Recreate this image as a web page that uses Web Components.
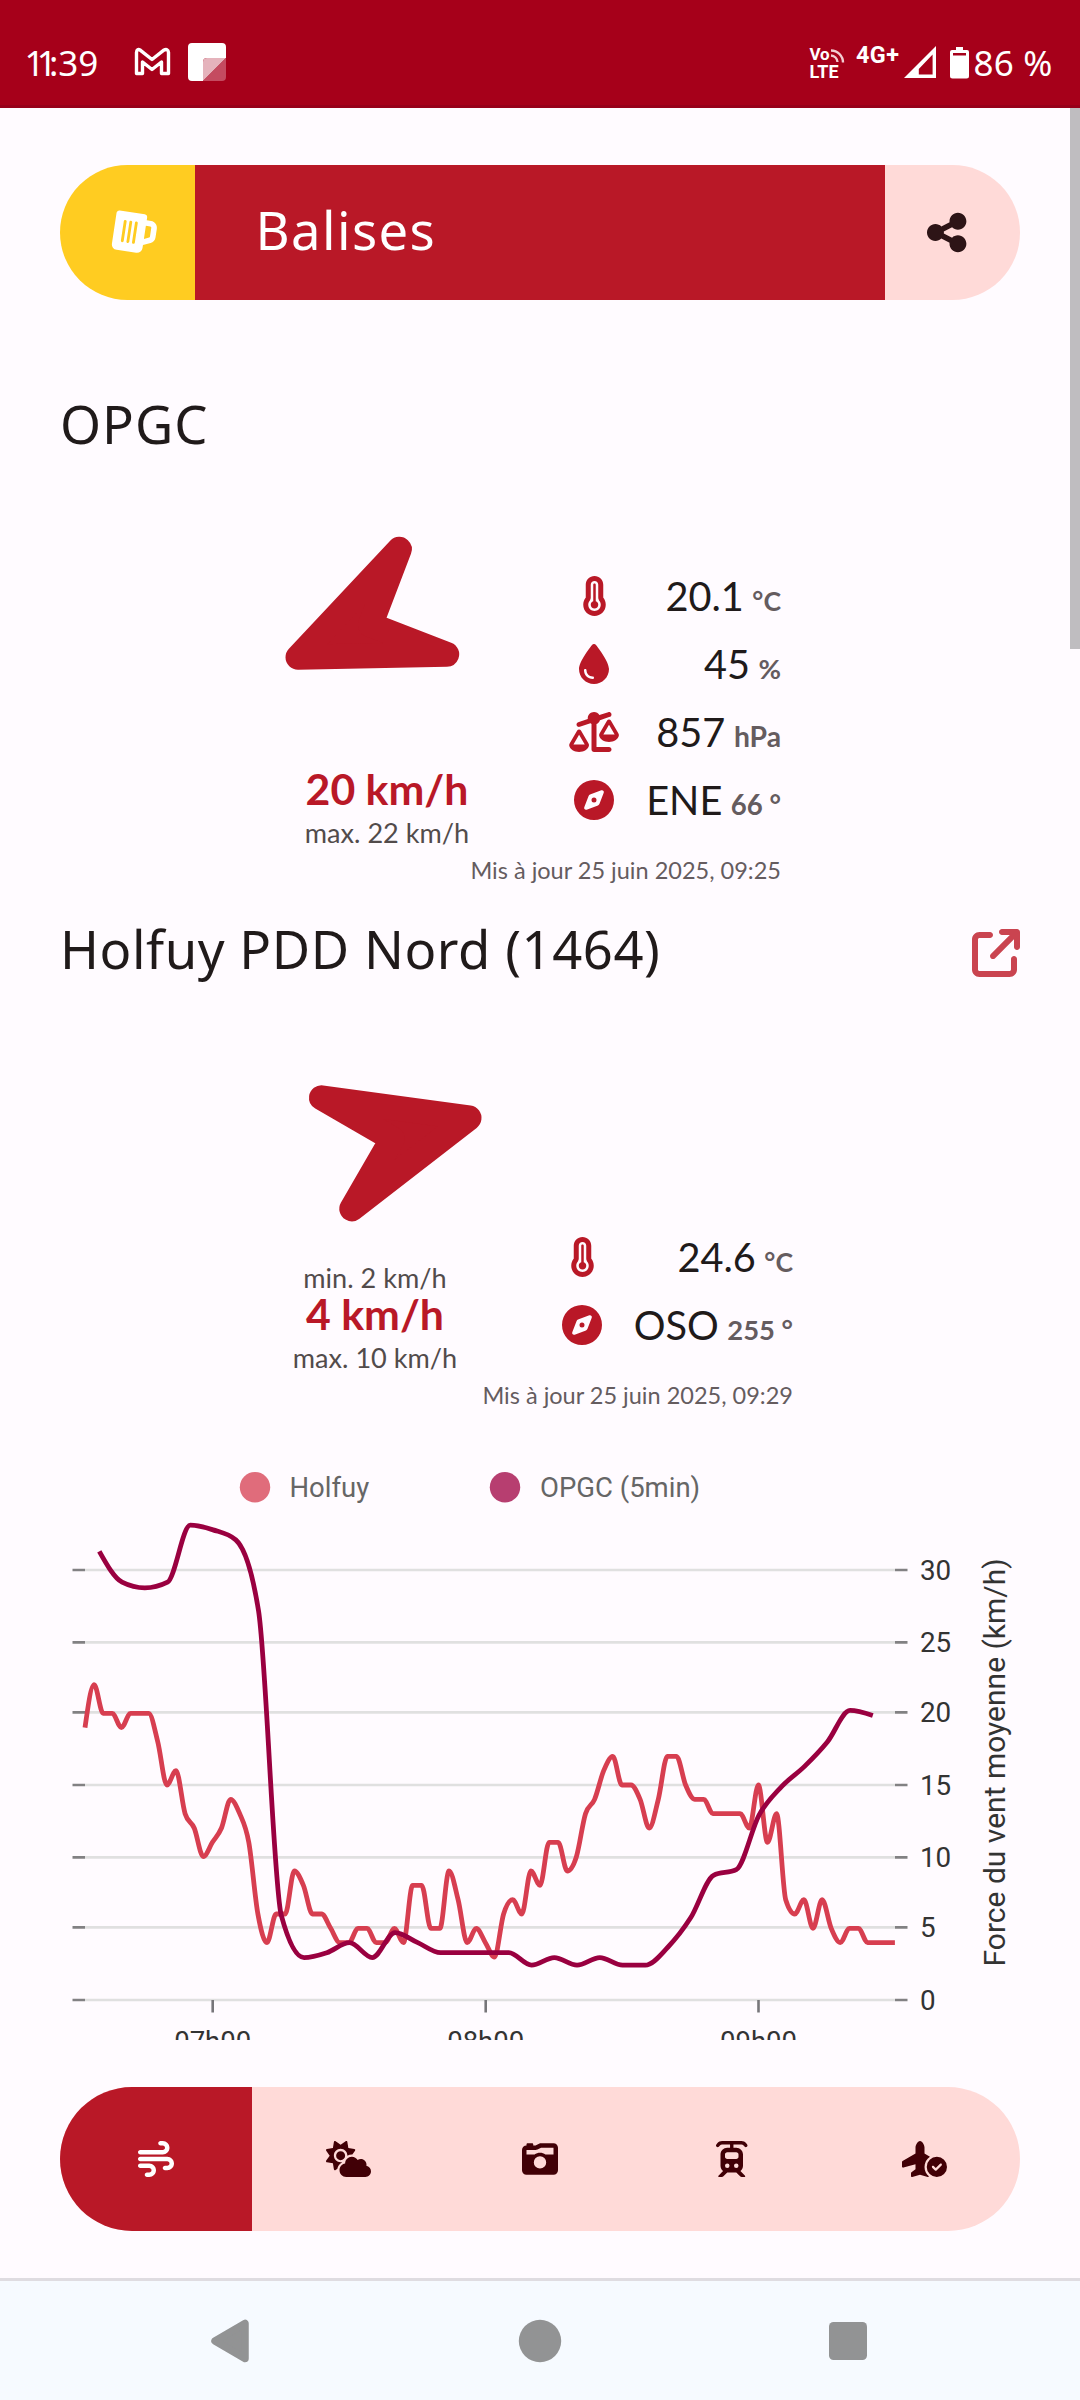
<!DOCTYPE html>
<html lang="fr">
<head>
<meta charset="utf-8">
<title>Balises</title>
<style>
  body { margin: 0; background: #fffbff; }
</style>
</head>
<body>
<balises-app></balises-app>

<script>
const ICONS = {
  thermo: ['0 0 320 512', 'M160 64c-26.500 0-48 21.500-48 48V276.500c0 17.300-7.100 31.900-15.300 42.500C86.200 332.600 80 349.500 80 368c0 44.200 35.800 80 80 80s80-35.800 80-80c0-18.500-6.200-35.400-16.700-48.900c-8.200-10.600-15.300-25.200-15.300-42.500V112c0-26.500-21.500-48-48-48zM48 112C48 50.200 98.100 0 160 0s112 50.100 112 112V276.500c0 .1 .1 .3 .2 .6c.2 .6 .8 1.600 1.700 2.800c18.900 24.400 30.100 55 30.100 88.100c0 79.500-64.500 144-144 144S16 447.500 16 368c0-33.200 11.200-63.800 30.100-88.100c.9-1.200 1.500-2.200 1.700-2.800c.1-.3 .2-.5 .2-.6V112zM208 368c0 26.500-21.500 48-48 48s-48-21.500-48-48c0-20.900 13.400-38.700 32-45.300V112c0-8.800 7.200-16 16-16s16 7.200 16 16V322.700c18.600 6.600 32 24.400 32 45.300z'],
  drop: ['0 0 384 512', 'M192 512C86 512 0 426 0 320C0 228.800 130.200 57.700 166.600 11.700C172.600 4.200 181.500 0 191.100 0h1.800c9.600 0 18.500 4.200 24.500 11.700C253.800 57.700 384 228.800 384 320c0 106-86 192-192 192zM96 336c0-8.800-7.200-16-16-16s-16 7.200-16 16c0 61.900 50.100 112 112 112c8.800 0 16-7.200 16-16s-7.200-16-16-16c-44.200 0-80-35.800-80-80z'],
  scale: ['0 0 640 512', 'M522.1 62.400c16.800-5.600 25.800-23.700 20.200-40.500S518.600-3.900 501.900 1.600l-113 37.700C375 15.800 349.300 0 320 0c-44.200 0-80 35.800-80 80c0 3 .2 5.900 .5 8.800L117.900 129.600c-16.800 5.600-25.800 23.700-20.200 40.500s23.700 25.800 40.500 20.200l135.500-45.200c4.500 3.200 9.300 5.900 14.400 8.200V480c0 17.700 14.300 32 32 32H512c17.700 0 32-14.300 32-32s-14.300-32-32-32H352V153.300c21-9.200 37.200-27 44.200-49l125.900-42zM439.600 288L512 163.800 584.400 288H439.600zM512 384c62.900 0 115.200-34 126-78.900c2.600-11-1-22.300-6.700-32.100L536.100 109.800c-5-8.600-14.200-13.800-24.100-13.800s-19.100 5.300-24.100 13.800L392.700 273.100c-5.700 9.800-9.300 21.100-6.700 32.100C396.800 350 449.100 384 512 384zM129.200 291.800L201.600 416H56.700l72.400-124.200zM3.200 433.100C14 478 66.300 512 129.200 512s115.200-34 126-78.900c2.600-11-1-22.300-6.700-32.100L153.200 237.800c-5-8.600-14.200-13.800-24.100-13.800s-19.100 5.300-24.100 13.800L9.900 401.100c-5.700 9.800-9.300 21.100-6.700 32.100z'],
  compass: ['0 0 512 512', 'M256 512A256 256 0 1 0 256 0a256 256 0 1 0 0 512zm50.700-186.900L162.400 380.600c-19.400 7.500-38.500-11.600-31-31l55.500-144.300c3.300-8.500 9.900-15.100 18.400-18.400l144.300-55.500c19.400-7.500 38.500 11.600 31 31L325.100 306.700c-3.200 8.500-9.900 15.100-18.400 18.400zM288 256a32 32 0 1 0 -64 0 32 32 0 1 0 64 0z'],
  share: ['0 0 448 512', 'M352 224c53 0 96-43 96-96s-43-96-96-96s-96 43-96 96c0 4 .2 8 .7 11.900l-94.100 47C145.400 170.200 121.900 160 96 160c-53 0-96 43-96 96s43 96 96 96c25.900 0 49.400-10.200 66.600-26.900l94.100 47c-.5 3.900-.7 7.800-.7 11.900c0 53 43 96 96 96s96-43 96-96s-43-96-96-96c-25.900 0-49.400 10.200-66.600 26.900l-94.100-47c.5-3.900 .7-7.800 .7-11.900s-.2-8-.7-11.900l94.100-47C302.600 213.800 326.100 224 352 224z'],
  beer: ['0 0 512 512', 'M32 64c0-17.700 14.300-32 32-32H352c17.700 0 32 14.300 32 32V96h51.200c42.400 0 76.800 34.400 76.800 76.800V274.900c0 30.400-17.900 57.900-45.600 70.200L384 381.700V416c0 35.300-28.700 64-64 64H96c-35.300 0-64-28.700-64-64V64zM384 311.600l56.400-25.100c4.600-2.100 7.600-6.600 7.600-11.700V172.800c0-7.100-5.700-12.800-12.800-12.800H384V311.600zM160 144c0-8.800-7.200-16-16-16s-16 7.200-16 16V368c0 8.800 7.200 16 16 16s16-7.200 16-16V144zm64 0c0-8.800-7.200-16-16-16s-16 7.200-16 16V368c0 8.800 7.200 16 16 16s16-7.200 16-16V144zm64 0c0-8.800-7.200-16-16-16s-16 7.200-16 16V368c0 8.800 7.200 16 16 16s16-7.200 16-16V144z'],
  external: ['0 0 512 512', 'M320 0c-17.700 0-32 14.300-32 32s14.300 32 32 32h82.700L201.400 265.400c-12.500 12.500-12.500 32.800 0 45.300s32.800 12.500 45.300 0L448 109.300V192c0 17.700 14.300 32 32 32s32-14.300 32-32V32c0-17.700-14.300-32-32-32H320zM80 32C35.800 32 0 67.800 0 112V432c0 44.200 35.800 80 80 80H400c44.200 0 80-35.800 80-80V320c0-17.700-14.300-32-32-32s-32 14.300-32 32V432c0 8.800-7.200 16-16 16H80c-8.800 0-16-7.200-16-16V112c0-8.800 7.200-16 16-16H192c17.700 0 32-14.300 32-32s-14.300-32-32-32H80z'],
  wind: ['0 0 512 512', 'M288 32c0 17.700 14.300 32 32 32h32c17.700 0 32 14.300 32 32s-14.300 32-32 32H32c-17.700 0-32 14.300-32 32s14.300 32 32 32H352c53 0 96-43 96-96s-43-96-96-96H320c-17.700 0-32 14.300-32 32zm64 352c0 17.700 14.300 32 32 32h32c53 0 96-43 96-96s-43-96-96-96H32c-17.700 0-32 14.300-32 32s14.300 32 32 32H416c17.700 0 32 14.300 32 32s-14.300 32-32 32H384c-17.700 0-32 14.300-32 32zM128 512h32c53 0 96-43 96-96s-43-96-96-96H32c-17.700 0-32 14.300-32 32s14.300 32 32 32H160c17.700 0 32 14.300 32 32s-14.300 32-32 32H128c-17.700 0-32 14.300-32 32s14.300 32 32 32z'],
  sun: ['0 0 640 512', 'M294.200 1.200c5.100 2.100 8.700 6.700 9.600 12.100l14.100 84.700 84.700 14.100c5.400 .9 10 4.500 12.100 9.600s1.500 10.900-1.600 15.400l-38.500 55c-2.200-.1-4.400-.2-6.700-.2c-23.300 0-45.100 6.200-64 17.100l0-1.100c0-53-43-96-96-96s-96 43-96 96s43 96 96 96c8.100 0 15.900-1 23.400-2.900c-36.600 18.100-63.300 53.100-69.800 94.900l-24.400 17c-4.500 3.200-10.300 3.800-15.400 1.600s-8.700-6.700-9.600-12.100L98.100 317.900 13.400 303.800c-5.400-.9-10-4.500-12.100-9.600s-1.500-10.900 1.600-15.400L52.500 208 2.900 137.200c-3.200-4.500-3.800-10.300-1.600-15.400s6.700-8.700 12.100-9.600L98.100 98.100l14.100-84.700c.9-5.400 4.500-10 9.600-12.100s10.900-1.500 15.400 1.600L208 52.500 278.800 2.900c4.500-3.200 10.300-3.800 15.400-1.600zM144 208a64 64 0 1 1 128 0 64 64 0 1 1 -128 0zM639.900 431.900c0 44.200-35.800 80-80 80H288c-53 0-96-43-96-96c0-47.600 34.600-87 80-94.600l0-1.300c0-53 43-96 96-96c34.900 0 65.400 18.600 82.200 46.400c13-9.100 28.800-14.400 45.800-14.400c44.200 0 80 35.800 80 80c0 5.900-.6 11.700-1.900 17.200c37.400 6.700 65.800 39.400 65.800 78.700z'],
  camera: ['0 0 512 512', 'M220.600 121.200L271.100 96 448 96v96H333.200c-21.900-15.100-48.500-24-77.200-24s-55.200 8.900-77.200 24H64V128H192c9.900 0 19.700-2.300 28.600-6.800zM0 128V416c0 35.300 28.700 64 64 64H448c35.300 0 64-28.700 64-64V96c0-35.300-28.700-64-64-64H271.100c-9.900 0-19.700 2.300-28.600 6.800L192 64H160V48c0-8.800-7.200-16-16-16H80c-8.800 0-16 7.200-16 16l0 16C28.700 64 0 92.700 0 128zM168 304a88 88 0 1 1 176 0 88 88 0 1 1 -176 0z'],
  tram: ['0 0 448 512', 'M86.800 48c-12.200 0-23.600 5.500-31.200 15L42.700 79C34.500 89.300 19.400 91 9 82.700S-3 59.400 5.300 49L18 33C34.700 12.200 60 0 86.800 0H361.200c26.700 0 52 12.200 68.700 33l12.800 16c8.300 10.400 6.600 25.500-3.700 33.700s-25.500 6.600-33.700-3.700L392.500 63c-7.600-9.500-19.100-15-31.200-15H248V96h40c53 0 96 43 96 96V352c0 30.600-14.300 57.800-36.600 75.400l65.500 65.500c7.100 7.100 2.100 19.100-7.900 19.100H365.300c-8.500 0-16.600-3.400-22.600-9.400L288 448H160l-54.600 54.600c-6 6-14.100 9.400-22.600 9.400H43c-10 0-15-12.100-7.900-19.100l65.500-65.500C78.300 409.800 64 382.600 64 352V192c0-53 43-96 96-96h40V48H86.800zM160 160c-17.700 0-32 14.300-32 32v32c0 17.700 14.300 32 32 32H288c17.700 0 32-14.300 32-32V192c0-17.700-14.300-32-32-32H160zm32 192a32 32 0 1 0 -64 0 32 32 0 1 0 64 0zm96 32a32 32 0 1 0 0-64 32 32 0 1 0 0 64z'],
  plane: ['0 0 640 512', 'M256 0c-35 0-64 59.500-64 93.700v84.600L8.100 283.400c-5 2.800-8.100 8.200-8.100 13.900v65.500c0 10.600 10.200 18.300 20.400 15.400l171.600-49 0 70.900-57.600 43.200c-4 3-6.400 7.800-6.400 12.800v42c0 7.800 6.300 14 14 14c1.300 0 2.600-.2 3.900-.5L256 480l110.100 31.500c1.300 .4 2.600 .5 3.900 .5c6 0 11.100-3.700 13.100-9C344.500 470.700 320 422.200 320 368c0-60.600 30.600-114 77.100-145.600L320 178.300V93.700C320 59.500 292 0 256 0zM640 368a144 144 0 1 0 -288 0 144 144 0 1 0 288 0zm-76.700-43.300c6.200 6.200 6.200 16.400 0 22.600l-72 72c-6.200 6.200-16.400 6.200-22.600 0l-40-40c-6.200-6.200-6.200-16.400 0-22.600s16.400-6.200 22.600 0L480 385.400l60.700-60.700c6.200-6.200 16.400-6.200 22.600 0z'],
};

function define(name, render) {
  customElements.define(name, class extends HTMLElement {
    connectedCallback() {
      if (this.shadowRoot) return;
      this.attachShadow({ mode: 'open' }).innerHTML = render(this);
    }
  });
}

define('fa-icon', el => {
  const [box, d] = ICONS[el.getAttribute('name')];
  const size = +el.getAttribute('size');
  const [, , w, h] = box.split(' ').map(Number);
  return `<style>:host{display:block;flex:none}svg{display:block;overflow:visible}</style>
    <svg viewBox="${box}" width="${w / h * size}" height="${size}"><path fill="currentColor" d="${d}"/></svg>`;
});

define('status-bar', () => `
  <style>
    :host{display:flex;box-sizing:border-box;height:108px;background:#a6001a;border-bottom:3px solid #97001a;
      color:#fff;font:35px/50px "Noto Sans",sans-serif;padding:38px 27.500px 0 24.500px;justify-content:space-between}
    div{display:flex;white-space:pre}
    i{font-style:normal;letter-spacing:-7.800px}
    svg{display:block}
    text{font-family:Roboto,sans-serif;font-weight:700;fill:#fff}
  </style>
  <div><span><i>11</i>:39</span>
    <svg width="100" height="51" viewBox="130 38 100 51" style="margin-left:31.500px">
      <path d="M136.500 73.500V52.500q.3-4.500 4-2.200L152 59.500l11.500-9.200q4.500-2.300 5 2.200v21H161.500V62L152 69.500 142.500 62V73.500Z" fill="none" stroke="#fff" stroke-width="3.400" stroke-linejoin="round"/>
      <path d="M192 43h30a4 4 0 0 1 4 4v11h-19a4 4 0 0 0-4 4v19h-11a4 4 0 0 1-4-4V47a4 4 0 0 1 4-4z" fill="#fff"/>
      <path d="M203 81V62a4 4 0 0 1 4-4h19z" fill="#e5b3bc"/>
      <path d="M226 58v19a4 4 0 0 1-4 4h-19z" fill="#c44b60"/>
    </svg>
  </div>
  <div>
    <svg width="164" height="51" viewBox="808 38 164 51">
      <text x="809.500" y="60" font-size="17" textLength="20">Vo</text>
      <text x="809.500" y="77.500" font-size="18" textLength="29">LTE</text>
      <path d="M831 55.500a7 7 0 0 1 6.500 6.500M831 50.500a12 12 0 0 1 12 12" fill="none" stroke="#f3ccd2" stroke-width="2.400"/>
      <text x="856" y="63" font-size="23.400" textLength="43">4G+</text>
      <path fill-rule="evenodd" fill="#fff" d="M904 78L936 46V78zM918.800 69V74.500H932.600V54.500z"/>
      <path fill-rule="evenodd" fill="#fff" d="M956 47h7v3h4a2 2 0 0 1 2 2v24a2.500 2.500 0 0 1-2.500 2.500h-14A2.500 2.500 0 0 1 950 76V52a2 2 0 0 1 2-2h4zM953 53v2.500h13V53z"/>
    </svg>
    <span style="margin-left:1.500px;letter-spacing:.2px">86 %</span>
  </div>`);

define('title-bar', () => `
  <style>
    :host{display:flex;height:135px;border-radius:67.500px;overflow:hidden}
    .a,.c{width:135px;box-sizing:border-box;display:flex;align-items:center;justify-content:center}
    .a{background:#ffcc21;color:#fff;padding-left:12px}
    .a fa-icon{transform:rotate(8.600deg)}
    .c{background:#ffdad8;color:#2d1416;padding-right:12px}
    .b{flex:1;background:#b91827;color:#fff;padding-left:60.500px;font:52.600px/129px "Noto Sans",sans-serif;letter-spacing:1.400px}
  </style>
  <div class="a"><fa-icon name="beer" size="45"></fa-icon></div>
  <div class="b"><slot></slot></div>
  <div class="c"><fa-icon name="share" size="45"></fa-icon></div>`);

define('station-title', () => `
  <style>
    :host{display:flex;justify-content:space-between;height:60px;color:#201a1a;font:52.600px/60px "Noto Sans",sans-serif}
    ::slotted(fa-icon){color:#ca4450;padding-top:10px}
  </style><span><slot></slot></span><slot name="link"></slot>`);

define('meta-row', el => `
  <style>
    :host{display:flex;height:68px;align-items:center;font:39.700px/68px Lato,sans-serif;color:#201a1a}
    .i{width:60px;display:flex;justify-content:center;color:#b91827}
    .v{flex:1;display:flex;align-items:baseline;justify-content:flex-end;gap:8.500px;white-space:pre}
    b{font-size:${el.getAttribute('unit-size') || 27}px;line-height:30px;color:#655c5f}
  </style>
  <div class="i"><fa-icon name="${el.getAttribute('icon')}" size="40"></fa-icon></div>
  <div class="v"><span><slot></slot></span><b>${el.getAttribute('unit')}</b></div>`);

define('wind-card', el => {
  const min = el.getAttribute('min');
  return `
  <style>
    :host{display:flex;flex-direction:column;font-family:Lato,sans-serif;margin:0 auto}
    .row{display:flex;justify-content:space-between;gap:77px}
    .wind{width:200px;display:flex;flex-direction:column;align-items:center;justify-content:space-between;height:100%}
    svg{display:block;overflow:visible}
    .t{display:flex;flex-direction:column;align-items:center}
    .s{font-size:27.100px;line-height:34px;color:#524b4b}
    .m{font-size:42.800px;line-height:37px;font-weight:700;color:#b91827;margin-bottom:9px}
    .meta{flex:1;display:flex;flex-direction:column;justify-content:flex-end;padding-bottom:16px}
    .u{text-align:right;font-size:23.520px;line-height:30px;margin-top:5px;color:#655c5f}
  </style>
  <div class="row" style="height:${el.getAttribute('h')}px">
    <div class="wind">
      <svg width="200" height="200"><polygon points="${el.getAttribute('arrow')}" fill="#b91827" stroke="#b91827" stroke-width="25" stroke-linejoin="round"/></svg>
      <div class="t">${min ? `<div class="s">${min}</div>` : ''}
      <div class="m">${el.getAttribute('speed')}</div>
      <div class="s">${el.getAttribute('max')}</div></div>
    </div>
    <div class="meta"><slot></slot></div>
  </div>
  <div class="u">${el.getAttribute('updated')}</div>`;
});

// Monotone cubic interpolation: never overshoots the measured values.
function spline(pts) {
  const n = pts.length;
  const s = pts.slice(1).map(([x, y], i) => (y - pts[i][1]) / (x - pts[i][0]));
  const m = pts.map((p, i) => {
    if (!i || i === n - 1) return 0;
    const a = s[i - 1], b = s[i];
    return a * b <= 0 ? 0 : 2 * Math.sign(a) * Math.min(Math.abs(a), Math.abs(b), Math.abs(a + b) / 4);
  });
  m[0] = (3 * s[0] - m[1]) / 2;
  m[n - 1] = (3 * s[n - 2] - m[n - 2]) / 2;
  let d = `M${pts[0]}`;
  for (let i = 1; i < n; i++) {
    const [x0, y0] = pts[i - 1], [x, y] = pts[i], h = (x - x0) / 3;
    d += `C${x0 + h},${y0 + h * m[i - 1]} ${x - h},${y - h * m[i]} ${x},${y}`;
  }
  return d;
}

define('wind-chart', () => {
  const holfuy = [19,22,20,20,19,20,20,20,18,15,16,13,12,10,11,12,14,13,11,6,4,6,6,9,8,6,6,5,4,4,5,5,4,4,5,4,8,8,5,5,9,7,4,5,4,3,6,7,6,9,8,11,11,9,10,13,14,16,17,15,15,14,12,14,17,17,15,14,14,13,13,13,13,12,15,11,13,7,6,7,5,7,5,4,5,5,4,4,4,4];
  const opgc = [31.3,29.15,28.75,29.15,33.13,32.8,32.1,27.15,5.9,2.96,3.3,4,2.96,4.7,4,3.3,3.3,3.3,3.3,2.43,2.96,2.43,2.96,2.43,2.43,3.7,5.75,8.7,9.1,12.9,14.9,16.3,18,20.2,19.85];
  const Y = v => 2000 - v * 14.333;
  const grid = [[0,2000],[5,1927.4],[10,1857.4],[15,1785],[20,1712.4],[25,1642.4],[30,1570]];
  return `
  <style>
    :host{display:block;height:590px}
    svg{display:block}
    text{font-family:Roboto,sans-serif;fill:#333}
    .lg{fill:#666;font-size:27.500px}
  </style>
  <svg width="960" height="590" viewBox="60 1450 960 590">
    <circle cx="255" cy="1487.300" r="15.200" fill="#e06c7b"/><text class="lg" x="289.500" y="1497">Holfuy</text>
    <circle cx="505" cy="1487.300" r="15.200" fill="#b73e70"/><text class="lg" x="540" y="1497">OPGC (5min)</text>
    ${grid.map(([v, y]) => `
      <path d="M85 ${y}H895" stroke="#e0e0e0" stroke-width="2.600"/>
      <path d="M72.500 ${y}H85M895 ${y}H907.500" stroke="#828183" stroke-width="2.600"/>
      <text x="920" y="${y + 10}" font-size="27.800">${v}</text>`).join('')}
    ${[['07h00',212.7],['08h00',485.7],['09h00',758.5]].map(([t, x]) => `
      <path d="M${x} 2000V2012.500" stroke="#77767a" stroke-width="2.600"/>
      <text x="${x}" y="2050.500" font-size="27.500" text-anchor="middle">${t}</text>`).join('')}
    <text transform="translate(1005 1966.400) rotate(-90)" font-size="30">Force du vent moyenne (km/h)</text>
    <g fill="none" stroke-width="4.800" stroke-linejoin="round">
      <path stroke="#d73e50" d="${spline(holfuy.map((v, i) => [85 + i * 9.1, Y(v)]))}"/>
      <path stroke="#9a0040" d="${spline(opgc.map((v, i) => [99.3 + i * 22.75, Y(v)]))}"/>
    </g>
  </svg>`;
});

define('tab-bar', () => `
  <style>
    :host{display:flex;height:144px;border-radius:72px;overflow:hidden;background:#ffdad8;color:#410006}
    div{flex:1;display:flex;align-items:center;justify-content:center}
    .on{background:#b91827;color:#fff}
  </style>
  ${['wind', 'sun', 'camera', 'tram', 'plane'].map((n, i) => `<div class="${i ? '' : 'on'}"><fa-icon name="${n}" size="36"></fa-icon></div>`).join('')}`);

define('system-nav', () => `
  <style>
    :host{display:flex;box-sizing:border-box;height:122px;border-top:3px solid #dfdce1;background:#f6faff;
      align-items:center;justify-content:space-between;padding:0 213px 0 210px}
    svg{display:block}
  </style>
  <svg width="40" height="44"><path d="M5 22L35 4.500V39.500Z" fill="#929394" stroke="#929394" stroke-width="7.500" stroke-linejoin="round"/></svg>
  <svg width="44" height="44"><circle cx="22" cy="22" r="21.200" fill="#929394"/></svg>
  <svg width="38" height="38"><rect width="38" height="38" rx="4.500" fill="#929394"/></svg>`);

define('balises-app', () => `
  <style>
    :host{display:flex;flex-direction:column;width:1080px;height:2400px;overflow:hidden;background:#fffbff}
    main{display:flex;height:2170px}
    .page{flex:1;padding:57px 50px 0 60px}
    .bar{width:10px;height:541px;background:#bfbdc0}
    .h1{margin-top:94px}.h2{margin-top:34px}
    .center{display:flex;padding-right:12px}
    wind-chart{margin-top:40px}
    tab-bar{margin-top:47px}
  </style>
  <status-bar></status-bar>
  <main>
    <div class="page">
      <title-bar>Balises</title-bar>
      <station-title class="h1" style="letter-spacing:1px">OPGC</station-title>
      <div class="center" style="margin-top:46px">
        <wind-card style="width:494px" h="350" arrow="11,157.3 112.3,49.3 83.5,124.8 159.7,154.3" speed="20 km/h" max="max. 22 km/h" updated="Mis à jour 25 juin 2025, 09:25">
          <meta-row icon="thermo" unit="°C" unit-size="26.600">20.1</meta-row>
          <meta-row icon="drop" unit="%" unit-size="27.500">45</meta-row>
          <meta-row icon="scale" unit="hPa" unit-size="28.300">857</meta-row>
          <meta-row icon="compass" unit="66 °" unit-size="27.600">ENE</meta-row>
        </wind-card>
      </div>
      <station-title class="h2" style="letter-spacing:.56px">Holfuy PDD Nord (1464)<fa-icon slot="link" name="external" size="48"></fa-icon></station-title>
      <div class="center" style="margin-top:81px">
        <wind-card style="width:518px" h="315" arrow="194,58 46.500,37.800 117.300,78.800 76.800,148.800" min="min. 2 km/h" speed="4 km/h" max="max. 10 km/h" updated="Mis à jour 25 juin 2025, 09:29">
          <meta-row icon="thermo" unit="°C" unit-size="26.600">24.6</meta-row>
          <meta-row icon="compass" unit="255 °" unit-size="27.400">OSO</meta-row>
        </wind-card>
      </div>
      <wind-chart></wind-chart>
      <tab-bar></tab-bar>
    </div>
    <div class="bar"></div>
  </main>
  <system-nav></system-nav>`);
</script>
</body>
</html>
